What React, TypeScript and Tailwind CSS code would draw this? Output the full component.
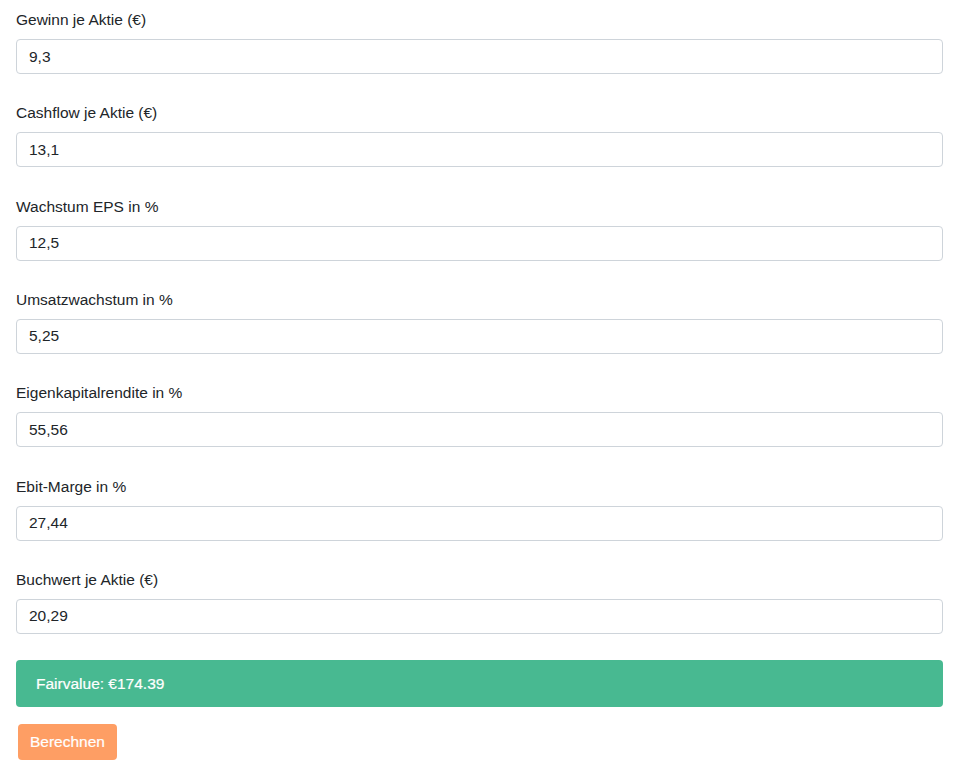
import React from "react";

const fields = [
  { label: "Gewinn je Aktie (€)", value: "9,3" },
  { label: "Cashflow je Aktie (€)", value: "13,1" },
  { label: "Wachstum EPS in %", value: "12,5" },
  { label: "Umsatzwachstum in %", value: "5,25" },
  { label: "Eigenkapitalrendite in %", value: "55,56" },
  { label: "Ebit-Marge in %", value: "27,44" },
  { label: "Buchwert je Aktie (€)", value: "20,29" },
];

export default function App() {
  return (
    <div
      className="w-[960px] bg-white pl-4 pr-[17px] pt-[8px] text-[#212529]"
      style={{ fontFamily: '"Liberation Sans", Arial, sans-serif' }}
    >
      <div className="flex flex-col gap-[27.33px]">
        {fields.map((f) => (
          <div key={f.label} className="flex flex-col">
            <label className="h-[24px] text-[15.5px] leading-[24px] mb-[7px]">{f.label}</label>
            <input
              defaultValue={f.value}
              className="h-[35px] w-full rounded-[4px] border border-[#ced4da] bg-white px-3 text-[15.5px] text-[#212529] outline-none"
            />
          </div>
        ))}
      </div>
      <div className="mt-[26px] flex h-[47px] items-center rounded-[4px] bg-[#48b991] px-5 text-[15.5px] text-white [-webkit-text-stroke:0.2px_white]">
        Fairvalue: €174.39
      </div>
      <div className="mt-[17px] pl-[2px]">
        <button className="h-[36px] rounded-[4px] bg-[#fe9e64] px-[12px] text-[15.5px] text-white [-webkit-text-stroke:0.2px_white]">
          Berechnen
        </button>
      </div>
    </div>
  );
}
